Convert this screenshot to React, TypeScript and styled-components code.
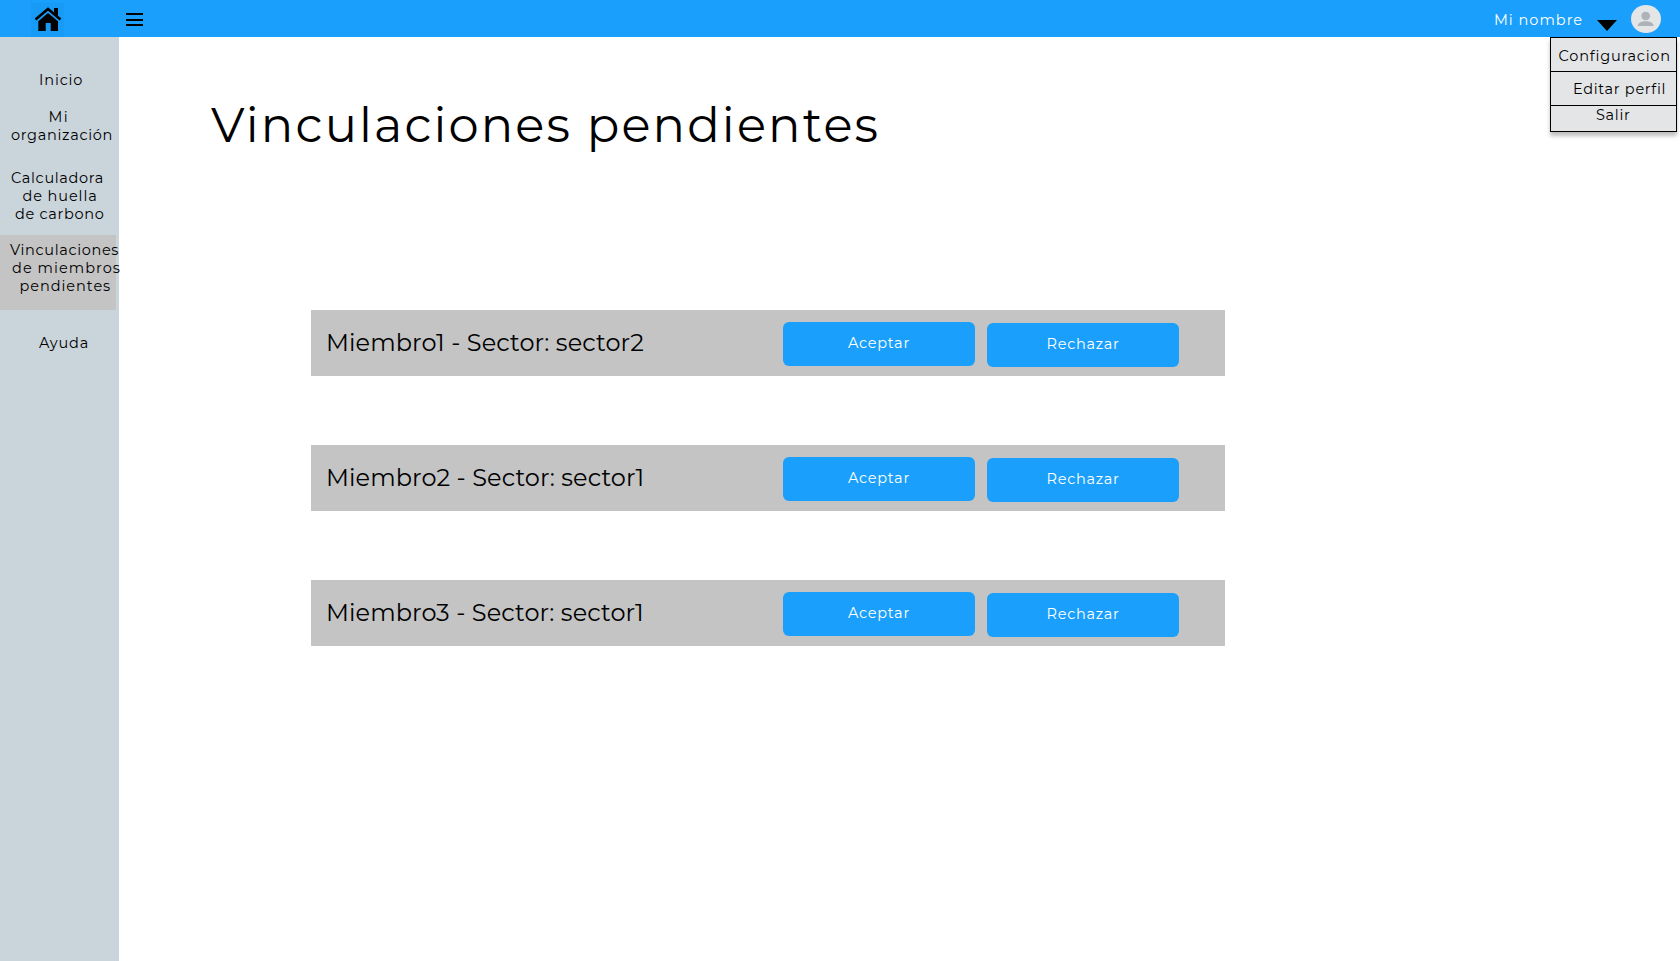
import React from 'react';
import styled, { createGlobalStyle } from 'styled-components';

const BLUE = '#1a9ffc';

const GlobalStyle = createGlobalStyle`
  * { box-sizing: border-box; }
  body {
    margin: 0;
    background: #fff;
    color: #000;
    font-family: Montserrat, Inter, 'Liberation Sans', sans-serif;
    font-size: 14.5px;
    font-weight: 450;
    line-height: 18px;
  }
`;

const Page = styled.div`
  display: flex;
  flex-direction: column;
  width: 1680px;
  height: 961px;
  overflow: hidden;
`;

const Header = styled.header`
  position: relative;
  display: flex;
  flex: none;
  align-items: flex-start;
  height: 37px;
  background: ${BLUE};
`;

const HomeLink = styled.a`
  display: block;
  width: 33px;
  height: 34px;
  margin: 3px 0 0 31px;
  background: #189bf7;
  svg { display: block; }
`;

const MenuButton = styled.button`
  display: flex;
  flex-direction: column;
  justify-content: space-between;
  width: 17px;
  height: 13px;
  margin: 13px 0 0 62px;
  padding: 0;
  border: 0;
  background: none;
`;

const Bar = styled.span`
  height: 2px;
  background: #000;
`;

const Account = styled.div`
  display: flex;
  align-items: flex-start;
  margin-left: auto;
  padding-right: 19px;
  color: #fff;
`;

const UserName = styled.span`
  width: 103px;
  padding-top: 11px;
  letter-spacing: 1px;
  white-space: nowrap;
`;

const Caret = styled.svg`
  display: block;
  margin-top: 20px;
`;

const Avatar = styled.svg`
  display: block;
  margin: 5px 0 0 14px;
`;

const Dropdown = styled.ul`
  position: absolute;
  top: 37px;
  right: 3px;
  width: 127px;
  height: 95px;
  margin: 0;
  padding: 0;
  list-style: none;
  border: 1px solid #000;
  background: #e4e5e7;
  box-shadow: 0 4px 4px rgba(0, 0, 0, 0.25);
`;

const DropdownItem = styled.li<{ $top: number; $left: number; $track: number }>`
  height: 34px;
  padding: ${p => p.$top}px 0 0 ${p => p.$left}px;
  letter-spacing: ${p => p.$track}px;
  white-space: nowrap;
  border-bottom: 1px solid #000;
  &:last-child { height: 25px; border-bottom: 0; }
`;

const Body = styled.div`
  display: flex;
  flex: 1;
`;

const Sidebar = styled.nav`
  flex: none;
  width: 119px;
  padding-top: 34px;
  background: #cad4db;
`;

const NavItem = styled.a<{ $gap?: number; $active?: boolean }>`
  display: block;
  width: 116px;
  margin-top: ${p => p.$gap ?? 0}px;
  padding: ${p => (p.$active ? '6px 0 15px' : '0')};
  background: ${p => (p.$active ? '#c4c4c4' : 'transparent')};
`;

const NavLine = styled.span<{ $left: number; $track: number }>`
  display: block;
  padding-left: ${p => p.$left}px;
  letter-spacing: ${p => p.$track}px;
  white-space: nowrap;
`;

const Main = styled.main`
  flex: 1;
  padding-top: 58px;
`;

const Title = styled.h1`
  margin: 0 0 155px 92px;
  font-size: 48px;
  font-weight: 450;
  line-height: 60px;
  letter-spacing: 2.15px;
`;

const Requests = styled.div`
  display: flex;
  flex-direction: column;
  gap: 69px;
  width: 914px;
  margin-left: 192px;
`;

const Request = styled.section`
  display: flex;
  align-items: flex-start;
  height: 66px;
  padding-left: 15px;
  background: #c4c4c4;
`;

const Member = styled.span`
  width: 457px;
  font-size: 24px;
  line-height: 66px;
  letter-spacing: 0.1px;
`;

const Action = styled.button<{ $drop?: boolean }>`
  width: 192px;
  height: 44px;
  margin: ${p => (p.$drop ? '13px 0 0 12px' : '12px 0 0')};
  padding: 0 0 3px;
  border: 0;
  border-radius: 6px;
  background: ${BLUE};
  color: #fff;
  font: inherit;
  letter-spacing: 0.7px;
`;

type Line = [text: string, left: number, track: number];

const nav: { gap?: number; active?: boolean; lines: Line[] }[] = [
  { lines: [['Inicio', 39, 0.85]] },
  { gap: 19, lines: [['Mi', 48.5, 1.3], ['organización', 11, 0.7]] },
  { gap: 25, lines: [['Calculadora', 11, 0.65], ['de huella', 22.5, 0.9], ['de carbono', 15, 0.7]] },
  { gap: 12, active: true, lines: [['Vinculaciones', 10, 0.65], ['de miembros', 12, 1.05], ['pendientes', 19.5, 0.95]] },
  { gap: 24, lines: [['Ayuda', 39, 0.8]] },
];

const members = ['Miembro1 - Sector: sector2', 'Miembro2 - Sector: sector1', 'Miembro3 - Sector: sector1'];

export default function App() {
  return (
    <Page>
      <GlobalStyle />
      <Header>
        <HomeLink aria-label="Inicio">
          <svg width="33" height="34" viewBox="0 0 33 34">
            <path d="M4.5 16.5 17 6l12.5 10.5" fill="none" stroke="#000" strokeWidth="2.6" />
            <path d="M23 5h4v9l-4-3.5zM17 10l10 8.3V28h-7.3v-8h-5v8H7.3v-9.7z" fill="#000" />
          </svg>
        </HomeLink>
        <MenuButton aria-label="Menu"><Bar /><Bar /><Bar /></MenuButton>
        <Account>
          <UserName>Mi nombre</UserName>
          <Caret width="20" height="11" viewBox="0 0 20 11"><path d="M0 0h20L10 11z" fill="#000" /></Caret>
          <Avatar width="30" height="28" viewBox="0 0 30 28">
            <ellipse cx="15" cy="14" rx="15" ry="14" fill="#e4e5e7" />
            <ellipse cx="14.7" cy="11" rx="4.4" ry="4.2" fill="#adb3b8" />
            <path d="M6.7 21c0-3 3.6-4.7 8-4.7s8 1.700 8 4.700z" fill="#adb3b8" />
          </Avatar>
        </Account>
        <Dropdown>
          <DropdownItem $top={9} $left={7.500} $track={0.8}>Configuracion</DropdownItem>
          <DropdownItem $top={8} $left={22} $track={0.7}>Editar perfil</DropdownItem>
          <DropdownItem $top={0} $left={45} $track={0.7}>Salir</DropdownItem>
        </Dropdown>
      </Header>
      <Body>
        <Sidebar>
          {nav.map(item => (
            <NavItem key={item.lines[0][0]} $gap={item.gap} $active={item.active}>
              {item.lines.map(([text, left, track]) => (
                <NavLine key={text} $left={left} $track={track}>{text}</NavLine>
              ))}
            </NavItem>
          ))}
        </Sidebar>
        <Main>
          <Title>Vinculaciones pendientes</Title>
          <Requests>
            {members.map(member => (
              <Request key={member}>
                <Member>{member}</Member>
                <Action>Aceptar</Action>
                <Action $drop>Rechazar</Action>
              </Request>
            ))}
          </Requests>
        </Main>
      </Body>
    </Page>
  );
}
